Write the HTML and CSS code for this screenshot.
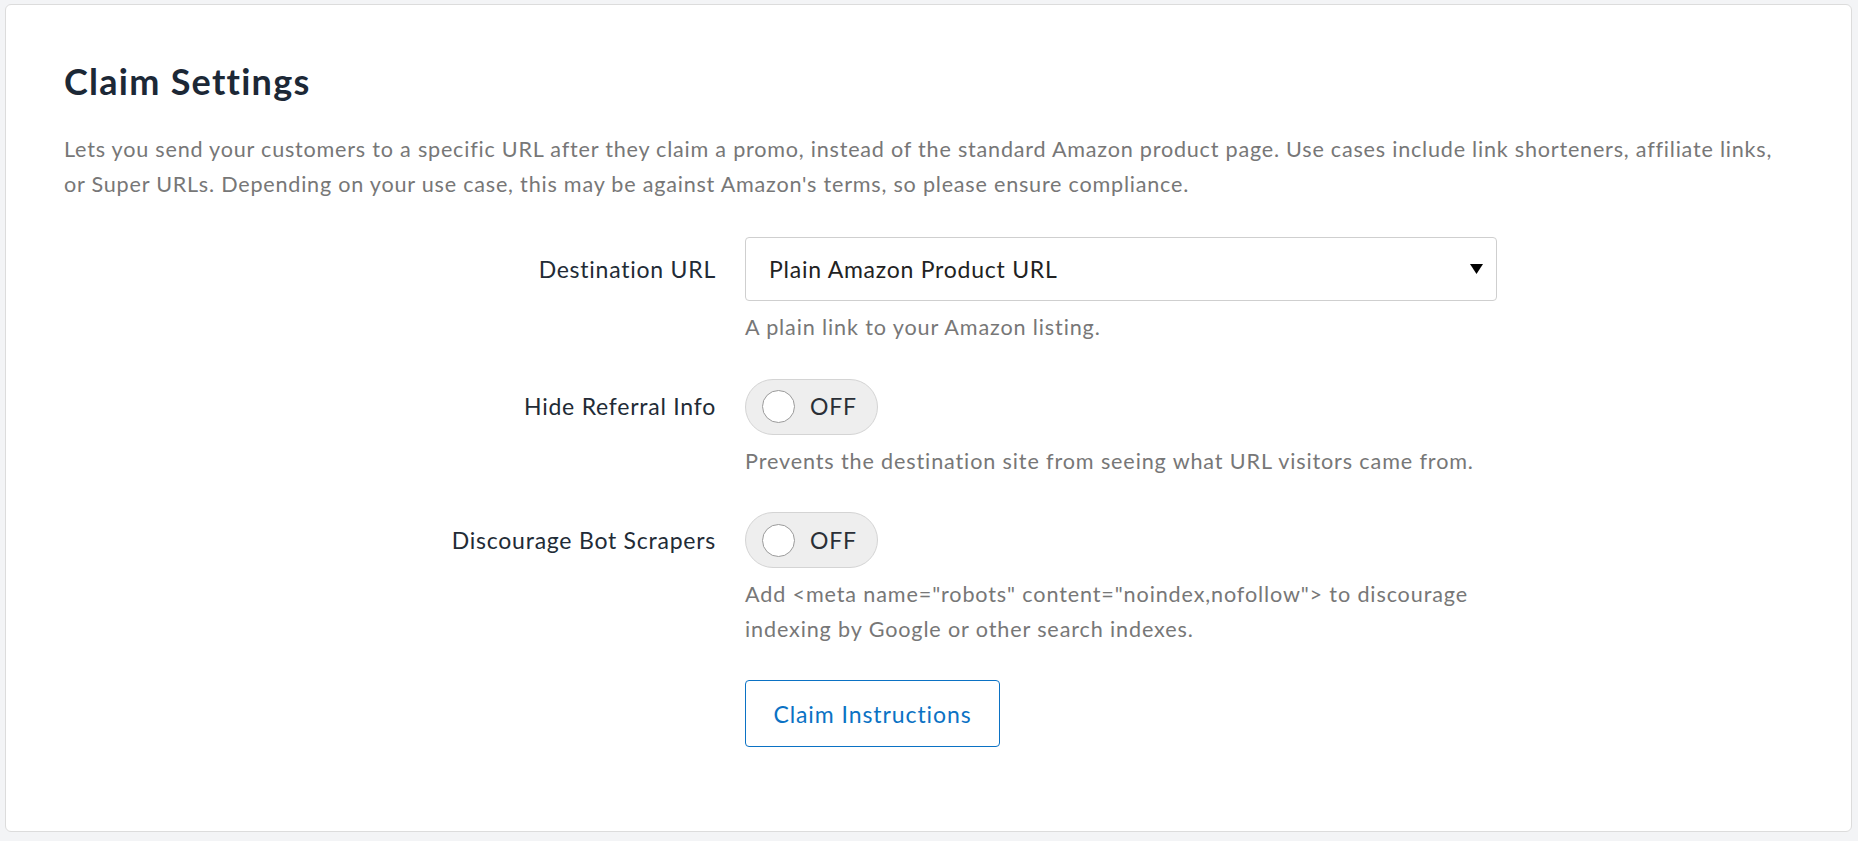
FILE: index.html
```html
<!DOCTYPE html>
<html lang="en">
<head>
<meta charset="utf-8">
<title>Claim Settings</title>
<link rel="stylesheet" href="styles.css">
</head>
<body>
<div class="card">
  <h2 class="title">Claim Settings</h2>
  <p class="desc">Lets you send your customers to a specific URL after they claim a promo, instead of the standard Amazon product page. Use cases include link shorteners, affiliate links, or Super URLs. Depending on your use case, this may be against Amazon's terms, so please ensure compliance.</p>

  <div class="form">
    <div class="group">
      <label class="label">Destination URL</label>
      <div class="select">
        <span>Plain Amazon Product URL</span>
        <svg class="caret" width="13" height="10" viewBox="0 0 13 10"><path d="M0 0H13L6.5 10Z" fill="#000"/></svg>
      </div>
      <p class="help">A plain link to your Amazon listing.</p>
    </div>

    <div class="group">
      <label class="label">Hide Referral Info</label>
      <div class="toggle"><span class="knob"></span><span class="state">OFF</span></div>
      <p class="help">Prevents the destination site from seeing what URL visitors came from.</p>
    </div>

    <div class="group">
      <label class="label">Discourage Bot Scrapers</label>
      <div class="toggle"><span class="knob"></span><span class="state">OFF</span></div>
      <p class="help">Add &lt;meta name="robots" content="noindex,nofollow"&gt; to discourage indexing by Google or other search indexes.</p>
    </div>

    <div class="group">
      <span class="label"></span>
      <div><button class="btn" type="button">Claim Instructions</button></div>
    </div>
  </div>
</div>
</body>
</html>
```

FILE: styles.css
```css
html, body {
  margin: 0;
  background: #f3f4f6;
}
body {
  padding: 4px 6px 9px 5px;
  font-family: Lato, "Open Sans", sans-serif;
  font-size: 21.6px;
  line-height: 1.6;
  letter-spacing: 0.04em;
  color: #222;
}
.card {
  background: #fff;
  border: 1px solid #dcdcdc;
  border-radius: 6px;
  padding: 55px 58px 84px 58px;
  box-sizing: border-box;
  height: 828px;
}
.title {
  margin: 0;
  font-size: 36px;
  line-height: 1.2;
  font-weight: 700;
  letter-spacing: 0.035em;
  color: #1c2836;
}
.desc {
  margin: 29px 0 0 0;
  letter-spacing: 0.036em;
  color: #777;
}
.form {
  margin-top: 36px;
}
.group {
  display: grid;
  grid-template-columns: 652px 752px;
  column-gap: 29px;
  align-items: center;
  margin-bottom: 34px;
}
.label {
  text-align: right;
  font-size: 23px;
  letter-spacing: 0.033em;
  color: #222b36;
}
.help {
  grid-column: 2;
  margin: 9px 0 0 0;
  color: #777;
}
.select {
  height: 64px;
  box-sizing: border-box;
  border: 1px solid #cfcfcf;
  border-radius: 4px;
  display: flex;
  align-items: center;
  justify-content: space-between;
  padding: 0 13px 0 23px;
  font-size: 23px;
  letter-spacing: 0.033em;
  color: #222;
}
.caret { display: block; }
.toggle {
  width: 133px;
  height: 56px;
  box-sizing: border-box;
  border: 1px solid #d4d4d4;
  border-radius: 28px;
  background: #eeeeee;
  display: flex;
  align-items: center;
  padding-left: 16px;
}
.knob {
  width: 33px;
  height: 33px;
  box-sizing: border-box;
  border-radius: 50%;
  background: #fff;
  border: 1px solid #9a9a9a;
}
.state {
  margin-left: 15px;
  font-size: 23px;
  letter-spacing: 0.035em;
  color: #2a2f36;
  line-height: 1;
}
.btn {
  font-family: inherit;
  font-size: 23px;
  letter-spacing: 0.04em;
  line-height: 1.6;
  color: #0b72c4;
  background: #fff;
  border: 1px solid #0b72c4;
  border-radius: 4px;
  padding: 0;
  height: 67px;
  width: 255px;
  cursor: pointer;
}
```
